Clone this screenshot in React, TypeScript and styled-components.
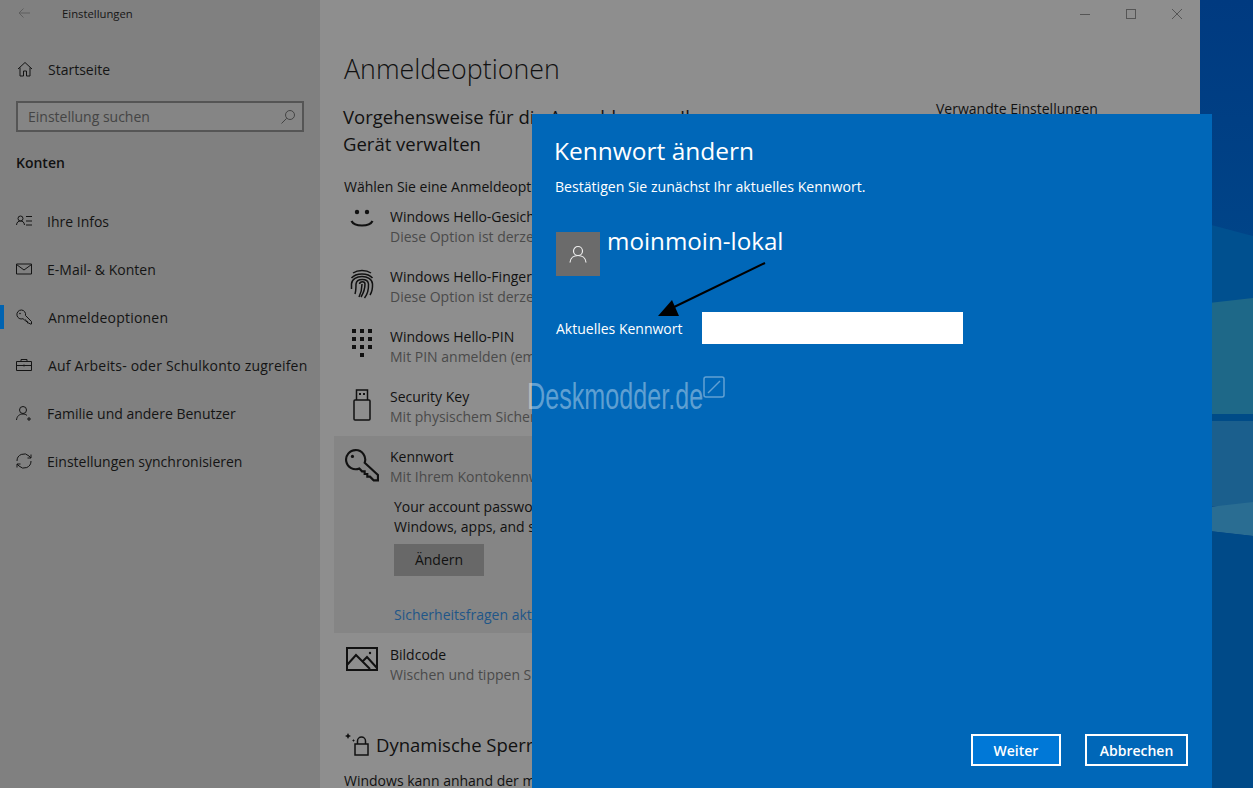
import React from "react"
import styled, { createGlobalStyle } from "styled-components"

const GlobalStyle = createGlobalStyle`
  html, body {
    margin: 0;
    padding: 0;
    height: 100%;
    overflow: hidden;
    background: #003f85;
  }
  body {
    font-family: "Open Sans", "Noto Sans", "Liberation Sans", sans-serif;
  }
`

const Screen = styled.div`
  position: relative;
  display: flex;
  width: 1253px;
  height: 788px;
  overflow: hidden;
`

const SettingsWindow = styled.div`
  display: flex;
  width: 1200px;
  height: 788px;
  flex-shrink: 0;
  background: #8e8e8e;
`

const Sidebar = styled.aside`
  display: flex;
  flex-direction: column;
  width: 320px;
  flex-shrink: 0;
  background: #808080;
  color: #141414;
`

const TitleRow = styled.div`
  display: flex;
  align-items: center;
  height: 26px;
  padding-left: 18px;
  font-size: 11.3px;
  color: #161616;

  svg {
    margin-right: 32px;
  }
`

const HomeRow = styled.div`
  display: flex;
  align-items: center;
  gap: 15px;
  height: 28px;
  margin-top: 29px;
  padding-left: 17px;
  font-size: 14px;
`

const SearchBox = styled.div`
  display: flex;
  align-items: center;
  justify-content: space-between;
  box-sizing: border-box;
  width: 288px;
  height: 31px;
  margin: 18px 0 0 16px;
  padding: 0 6px 0 10px;
  border: 2px solid #555;
  background: #858585;
  font-size: 14px;
  color: #444;
`

const SectionLabel = styled.div`
  margin: 21px 0 0 16px;
  height: 20px;
  line-height: 20px;
  font-size: 14px;
  font-weight: 600;
  color: #111;
`

const NavList = styled.nav`
  display: flex;
  flex-direction: column;
  margin-top: 24px;
`

const NavItem = styled.div<{ $active?: boolean }>`
  position: relative;
  display: flex;
  align-items: center;
  gap: 15px;
  height: 48px;
  padding-left: 16px;
  font-size: 14px;
  white-space: nowrap;

  ${(props) =>
    props.$active &&
    `
      &::before {
        content: "";
        position: absolute;
        left: 0;
        top: 12px;
        width: 4px;
        height: 24px;
        background: #0063b1;
      }
    `}
`

const NavLabel = styled.span<{ $wide?: boolean }>`
  ${(props) =>
    props.$wide &&
    `
      margin-left: 1px;
      letter-spacing: 0.2px;
    `}
`

const Content = styled.main`
  position: relative;
  display: flex;
  flex: 1;
  min-width: 0;
  overflow: hidden;
  color: #111;
`

const MainColumn = styled.div`
  display: flex;
  flex-direction: column;
  width: 592px;
  flex-shrink: 0;
  padding: 0 0 0 14px;
  white-space: nowrap;

  > * {
    flex-shrink: 0;
  }
`

const RelatedColumn = styled.div`
  padding: 99px 0 0 10px;
  font-size: 14px;
  color: #111;
  white-space: nowrap;
`

const WindowControls = styled.div`
  position: absolute;
  top: 0;
  right: 0;
  display: flex;
`

const ControlButton = styled.div`
  display: flex;
  align-items: center;
  justify-content: center;
  width: 46px;
  height: 28px;
  color: #555;
`

const PageTitle = styled.h1`
  margin: 50px 0 0 10px;
  height: 38px;
  line-height: 38px;
  font-size: 26.8px;
  font-weight: 300;
  color: #111;
`

const SubHeading = styled.h2`
  margin: 15px 0 0 9px;
  line-height: 27px;
  font-size: 18.5px;
  font-weight: 400;
  color: #111;
`

const Intro = styled.p`
  margin: 20px 0 0 10px;
  height: 19px;
  line-height: 20px;
  font-size: 14px;
`

const OptionRow = styled.div`
  display: flex;
  flex-shrink: 0;
  height: 60px;
  padding-top: 11px;
  box-sizing: border-box;
`

const OptionIcon = styled.div`
  display: flex;
  justify-content: center;
  width: 56px;
  flex-shrink: 0;
  padding-top: 2px;
`

const OptionText = styled.div`
  display: flex;
  flex-direction: column;
  font-size: 14px;
  line-height: 20px;
`

const OptionHint = styled.span`
  color: #4a4a4a;
`

const ExpandedPanel = styled.div`
  display: flex;
  flex-direction: column;
  height: 197px;
  margin-bottom: 1px;
  background: #858585;
`

const PanelBody = styled.div`
  display: flex;
  flex-direction: column;
  align-items: flex-start;
  margin-top: 1px;
  padding: 0 0 0 60px;
  font-size: 14px;
  line-height: 20px;
`

const ChangeButton = styled.div`
  display: flex;
  align-items: center;
  justify-content: center;
  width: 90px;
  height: 32px;
  margin-top: 7px;
  background: #686868;
  color: #111;
  font-size: 14px;
`

const PanelLink = styled.a`
  margin-top: 29px;
  color: #1f5688;
  font-size: 14px;
  line-height: 20px;
`

const LockHeading = styled.div`
  display: flex;
  align-items: center;
  gap: 6px;
  margin: 34px 0 0 10px;
  height: 32px;
  font-size: 18.5px;
  color: #111;
`

const LockText = styled.p`
  margin: 11px 0 0 10px;
  font-size: 14px;
  line-height: 20px;
`

const Desktop = styled.div`
  flex: 1;
  height: 788px;

  svg {
    display: block;
  }
`

const Dialog = styled.section`
  position: absolute;
  left: 532px;
  top: 114px;
  display: flex;
  flex-direction: column;
  box-sizing: border-box;
  width: 680px;
  height: 674px;
  padding: 18px 24px 22px 23px;
  background: #0067b8;
  color: #fff;
`

const DialogTitle = styled.h2`
  margin: 0 0 0 -1px;
  height: 38px;
  line-height: 38px;
  font-size: 24.5px;
  font-weight: 400;
`

const DialogHint = styled.p`
  margin: 7px 0 0;
  font-size: 14.1px;
  line-height: 20px;
`

const AccountRow = styled.div`
  display: flex;
  gap: 7px;
  margin: 35px 0 0 1px;
`

const Avatar = styled.div`
  display: flex;
  align-items: center;
  justify-content: center;
  width: 44px;
  height: 44px;
  background: #6b6b6b;
`

const AccountName = styled.div`
  margin-top: -6px;
  font-size: 24.2px;
  line-height: 30px;
`

const PasswordRow = styled.div`
  display: flex;
  align-items: center;
  gap: 18px;
  margin: 36px 0 0 1px;
  font-size: 14px;
`

const PasswordLabel = styled.label`
  width: 128px;
  white-space: nowrap;
`

const PasswordInput = styled.div`
  width: 261px;
  height: 32px;
  background: #fff;
`

const DialogFooter = styled.div`
  display: flex;
  justify-content: flex-end;
  gap: 24px;
  margin-top: auto;
`

const DialogButton = styled.div<{ $primary?: boolean; $width: number }>`
  display: flex;
  align-items: center;
  justify-content: center;
  box-sizing: border-box;
  width: ${(props) => props.$width}px;
  height: 32px;
  border: 2px solid #fff;
  background: ${(props) => (props.$primary ? "#0078d7" : "transparent")};
  font-size: 14px;
  font-weight: 600;
`

const Watermark = styled.div`
  position: absolute;
  left: 527px;
  top: 374px;
  display: flex;
  align-items: flex-start;
  color: rgba(255, 255, 255, 0.38);
  pointer-events: none;
`

const WatermarkText = styled.span`
  display: inline-block;
  width: 176px;
  font-family: "Liberation Sans", sans-serif;
  font-size: 37px;
  line-height: 46px;
  white-space: nowrap;
  transform: scaleX(0.68);
  transform-origin: left center;
`

const Overlay = styled.svg`
  position: absolute;
  left: 650px;
  top: 255px;
  pointer-events: none;
`

const Line = (props: React.PropsWithChildren<{ w?: number; h?: number; sw?: number; box?: string }>) => (
  <svg
    width={props.w ?? 16}
    height={props.h ?? 16}
    viewBox={props.box ?? "0 0 16 16"}
    fill="none"
    stroke="currentColor"
    strokeWidth={props.sw ?? 1}
  >
    {props.children}
  </svg>
)

const App: React.FC = () => {
  return (
    <Screen>
      <GlobalStyle />
      <SettingsWindow>
        <Sidebar>
          <TitleRow>
            <span style={{ color: "#5e5e5e", display: "flex" }}>
              <Line w={12} h={12} box="0 0 12 12">
                <path d="M12 6H1M5.500 1.500 1 6l4.500 4.500" />
              </Line>
            </span>
            Einstellungen
          </TitleRow>
          <HomeRow>
            <Line>
              <path d="M1 8 8 1.500 15 8M3 6.500V15h3.500v-5h3v5H13V6.500" />
            </Line>
            Startseite
          </HomeRow>
          <SearchBox>
            Einstellung suchen
            <span style={{ color: "#444", display: "flex" }}>
              <Line>
                <circle cx="10" cy="6" r="4.500" />
                <path d="M6.700 9.300 1.500 14.500" />
              </Line>
            </span>
          </SearchBox>
          <SectionLabel>Konten</SectionLabel>
          <NavList>
            <NavItem>
              <Line>
                <circle cx="4.500" cy="5.500" r="2.500" />
                <path d="M.5 12c.3-3 2-4 4-4s3.700 1 4 4M10 3.500h6M10 8h6M10 12h6" />
              </Line>
              Ihre Infos
            </NavItem>
            <NavItem>
              <Line>
                <path d="M.5 3h15v10H.5zM.5 3.500 8 9l7.500-5.500" />
              </Line>
              E-Mail- &amp; Konten
            </NavItem>
            <NavItem $active>
              <Line>
                <path d="M5.500 1a4.500 4.500 0 1 0 1.500 8.700l1.500 1.300H10v1.500h1.500V14H13l1 1h1.500v-2.500L9.500 6.500A4.500 4.500 0 0 0 5.500 1z" />
                <circle cx="4" cy="4.500" r=".8" fill="currentColor" stroke="none" />
              </Line>
              <NavLabel $wide>Anmeldeoptionen</NavLabel>
            </NavItem>
            <NavItem>
              <Line>
                <path d="M.5 4.500h15v9H.5zM5 4.500V2.500h6v2M.5 8.500h15M8 7.500v2" />
              </Line>
              <NavLabel $wide>Auf Arbeits- oder Schulkonto zugreifen</NavLabel>
            </NavItem>
            <NavItem>
              <Line>
                <circle cx="7" cy="5" r="3.500" />
                <path d="M.5 15c.4-4 3-6 6.500-6 1.500 0 3 .5 4 1.500M13 12v4M11 14h4" />
              </Line>
              Familie und andere Benutzer
            </NavItem>
            <NavItem>
              <Line>
                <path d="M1 8a7 7 0 0 1 12-5l2 2M15 8a7 7 0 0 1-12 5l-2-2M15 1.500V5h-3.500M1 14.500V11h3.500" />
              </Line>
              Einstellungen synchronisieren
            </NavItem>
          </NavList>
        </Sidebar>
        <Content>
          <MainColumn>
            <PageTitle>Anmeldeoptionen</PageTitle>
            <SubHeading>
              Vorgehensweise für die Anmeldung an Ihrem
              <br />
              Gerät verwalten
            </SubHeading>
            <Intro>Wählen Sie eine Anmeldeoption aus</Intro>
            <OptionRow>
              <OptionIcon>
                <svg width="24" height="20" viewBox="0 0 24 20" fill="none" stroke="#111" strokeWidth="2.200">
                  <circle cx="7" cy="3" r="2.200" fill="#111" stroke="none" />
                  <circle cx="17" cy="3" r="2.200" fill="#111" stroke="none" />
                  <path d="M1.500 12c3 6 18 6 21 0" />
                </svg>
              </OptionIcon>
              <OptionText>
                Windows Hello-Gesichtserkennung
                <OptionHint>Diese Option ist derzeit nicht verfügbar</OptionHint>
              </OptionText>
            </OptionRow>
            <OptionRow>
              <OptionIcon>
                <svg width="24" height="30" viewBox="0 0 24 30" fill="none" stroke="#111" strokeWidth="1.500">
                  <path d="M3 4c5-3.500 13-3.500 18 0M1.500 9C6 3.500 18 3.500 22.500 9" />
                  <path d="M1.500 20V15C2 5 22 5 22.500 15c.2 4-.5 8-2.500 11" />
                  <path d="M5 25c1-3 1-6 1-10 .5-6 12-6 12.500 0 .2 5-.8 10-4 14" />
                  <path d="M9 28c2-4 3-8 3-13M9.500 15c.5-3 5.500-3 5.500 0 0 5-1.500 9-4 13" />
                </svg>
              </OptionIcon>
              <OptionText>
                Windows Hello-Fingerabdruck
                <OptionHint>Diese Option ist derzeit nicht verfügbar</OptionHint>
              </OptionText>
            </OptionRow>
            <OptionRow>
              <OptionIcon>
                <svg width="22" height="29" viewBox="0 0 22 29" fill="#111">
                  {[0, 8, 16].flatMap((y) =>
                    [0, 8, 16].map((x) => <rect key={`${x}-${y}`} x={x + 1} y={y} width="4" height="4" />)
                  )}
                  <rect x="9" y="24" width="4" height="4" />
                </svg>
              </OptionIcon>
              <OptionText>
                Windows Hello-PIN
                <OptionHint>Mit PIN anmelden (empfohlen)</OptionHint>
              </OptionText>
            </OptionRow>
            <OptionRow>
              <OptionIcon>
                <svg width="18" height="32" viewBox="0 0 18 32" fill="none" stroke="#111" strokeWidth="1.500">
                  <rect x="1" y="11" width="16" height="20" rx="1" />
                  <path d="M3.500 11V1h11v10" />
                  <rect x="6" y="4" width="2" height="2" fill="#111" stroke="none" />
                  <rect x="10" y="4" width="2" height="2" fill="#111" stroke="none" />
                </svg>
              </OptionIcon>
              <OptionText>
                Security Key
                <OptionHint>Mit physischem Sicherheitsschlüssel anmelden</OptionHint>
              </OptionText>
            </OptionRow>
            <ExpandedPanel>
              <OptionRow>
                <OptionIcon>
                  <svg width="34" height="34" viewBox="0 0 32 32" fill="none" stroke="#111" strokeWidth="2">
                    <path d="M10 1a9 9 0 1 0 3.500 17.300l2.500 2.700h2.500v2.500h2.500v2.500h2.500l3.500 3.500H31v-5L18.500 13A9 9 0 0 0 10 1z" />
                    <circle cx="7" cy="7" r="1.500" fill="#111" stroke="none" />
                  </svg>
                </OptionIcon>
                <OptionText>
                  Kennwort
                  <OptionHint>Mit Ihrem Kontokennwort anmelden</OptionHint>
                </OptionText>
              </OptionRow>
              <PanelBody>
                <span>Your account password is all set up to sign in to</span>
                <span>Windows, apps, and services.</span>
                <ChangeButton>Ändern</ChangeButton>
                <PanelLink>Sicherheitsfragen aktualisieren</PanelLink>
              </PanelBody>
            </ExpandedPanel>
            <OptionRow>
              <OptionIcon>
                <svg width="32" height="24" viewBox="0 0 32 24" fill="none" stroke="#111" strokeWidth="2">
                  <rect x="1" y="1" width="30" height="22" />
                  <path d="M1 18 10 8l14 14M17 14l4-4 10 11" />
                  <circle cx="24" cy="6" r="1.200" fill="#111" stroke="none" />
                </svg>
              </OptionIcon>
              <OptionText>
                Bildcode
                <OptionHint>Wischen und tippen Sie auf Ihr Lieblingsfoto</OptionHint>
              </OptionText>
            </OptionRow>
            <LockHeading>
              <svg width="26" height="24" viewBox="0 0 26 24" fill="none" stroke="#111" strokeWidth="1.500">
                <path d="M4 1 5 3 7 4 5 5 4 7 3 5 1 4 3 3zM9.500 7l.5 1 1 .5-1 .5-.5 1-.5-1-1-.5 1-.5z" fill="#111" stroke="none" />
                <rect x="11" y="12" width="13" height="11" />
                <path d="M13.500 12V9a4 4 0 0 1 8 0v3" />
              </svg>
              Dynamische Sperre
            </LockHeading>
            <LockText>Windows kann anhand der mit Ihrem PC gekoppelten Geräte erkennen</LockText>
          </MainColumn>
          <RelatedColumn>Verwandte Einstellungen</RelatedColumn>
          <WindowControls>
            <ControlButton>
              <Line w={12} h={12} box="0 0 12 12">
                <path d="M1 6.500h10" />
              </Line>
            </ControlButton>
            <ControlButton>
              <Line w={12} h={12} box="0 0 12 12">
                <rect x="1.500" y="1.500" width="9" height="9" />
              </Line>
            </ControlButton>
            <ControlButton>
              <Line w={12} h={12} box="0 0 12 12">
                <path d="M1 1l10 10M11 1 1 11" />
              </Line>
            </ControlButton>
          </WindowControls>
        </Content>
      </SettingsWindow>
      <Desktop>
        <svg width="53" height="788" viewBox="0 0 53 788">
          <defs>
            <linearGradient id="sky" x1="0" y1="0" x2="0" y2="1">
              <stop offset="0" stopColor="#003a80" />
              <stop offset="1" stopColor="#004488" />
            </linearGradient>
          </defs>
          <rect width="53" height="240" fill="url(#sky)" />
          <polygon points="0,222 53,236 53,303 0,304" fill="#00508f" />
          <polygon points="0,304 53,298 53,414 0,414" fill="#1e6888" />
          <rect y="414" width="53" height="7" fill="#004b87" />
          <rect y="421" width="53" height="85" fill="#1b5f8d" />
          <polygon points="0,508 53,502 53,536 0,530" fill="#2a6d92" />
          <polygon points="0,530 53,536 53,788 0,788" fill="#004a88" />
        </svg>
      </Desktop>
      <Dialog>
        <DialogTitle>Kennwort ändern</DialogTitle>
        <DialogHint>Bestätigen Sie zunächst Ihr aktuelles Kennwort.</DialogHint>
        <AccountRow>
          <Avatar>
            <svg width="18" height="18" viewBox="0 0 18 18" fill="none" stroke="#eee" strokeWidth="1.200">
              <circle cx="9" cy="6" r="4.500" />
              <path d="M1 17.500c.4-4.500 4-7 8-7s7.600 2.500 8 7" />
            </svg>
          </Avatar>
          <AccountName>moinmoin-lokal</AccountName>
        </AccountRow>
        <PasswordRow>
          <PasswordLabel>Aktuelles Kennwort</PasswordLabel>
          <PasswordInput />
        </PasswordRow>
        <DialogFooter>
          <DialogButton $primary $width={90}>
            Weiter
          </DialogButton>
          <DialogButton $width={103}>Abbrechen</DialogButton>
        </DialogFooter>
      </Dialog>
      <Overlay width="120" height="65" viewBox="0 0 120 65">
        <path d="M115 8 20 54" stroke="#000" strokeWidth="2" />
        <polygon points="8,61 22,45 29,61" fill="#000" />
      </Overlay>
      <Watermark>
        <WatermarkText>Deskmodder.de</WatermarkText>
        <svg width="22" height="22" viewBox="0 0 22 22" fill="none" stroke="currentColor" strokeWidth="1.500" style={{ marginTop: 2 }}>
          <rect x="1" y="1" width="20" height="20" rx="2" />
          <path d="M5 17 17 5" />
        </svg>
      </Watermark>
    </Screen>
  )
}

export default App
